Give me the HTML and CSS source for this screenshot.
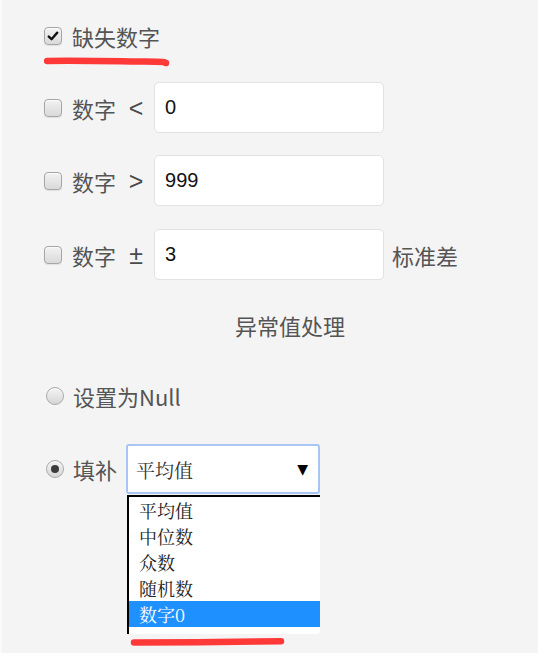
FILE: index.html
```html
<!DOCTYPE html>
<html lang="zh-CN">
<head>
<meta charset="utf-8">
<title>缺失数字</title>
<link rel="stylesheet" href="styles.css">
</head>
<body>
<div class="page">
  <div class="row row-first">
    <span class="cb checked"><svg viewBox="0 0 18 18" width="18" height="18"><path d="M4.2 9.6 L7.4 12.6 L13.8 5.2" fill="none" stroke="#111" stroke-width="2.6" stroke-linecap="round" stroke-linejoin="round"/></svg></span>
    <span class="label">缺失数字</span>
  </div>
  <svg class="mark mark-one" viewBox="0 0 126 12" width="126" height="12"><path d="M3 5 C 30 4.5, 70 5.2, 100 5.6 S 118 6.5, 122 7" fill="none" stroke="#ff3838" stroke-width="6.5" stroke-linecap="round"/></svg>

  <div class="row row-input r2">
    <span class="cb"></span>
    <span class="label">数字</span>
    <span class="op">&lt;</span>
    <div class="field">0</div>
  </div>
  <div class="row row-input r3">
    <span class="cb"></span>
    <span class="label">数字</span>
    <span class="op">&gt;</span>
    <div class="field">999</div>
  </div>
  <div class="row row-input r4">
    <span class="cb"></span>
    <span class="label">数字</span>
    <span class="op">±</span>
    <div class="field">3</div>
    <span class="label after">标准差</span>
  </div>

  <div class="heading">异常值处理</div>

  <div class="row radio-row rr1">
    <span class="radio"></span>
    <span class="label">设置为Null</span>
  </div>

  <div class="row radio-row rr2">
    <span class="radio on"><span class="dot"></span></span>
    <span class="label">填补</span>
    <div class="select-wrap">
      <div class="select">
        <span class="sel-text">平均值</span>
        <span class="arrow">▼</span>
      </div>
      <ul class="options">
        <li>平均值</li>
        <li>中位数</li>
        <li>众数</li>
        <li>随机数</li>
        <li class="active">数字0</li>
      </ul>
      <svg class="mark mark-two" viewBox="0 0 156 12" width="156" height="12"><path d="M4 6.6 C 50 6.4, 110 6, 151 5.2" fill="none" stroke="#ff3838" stroke-width="6.5" stroke-linecap="round"/></svg>
    </div>
  </div>
</div>
</body>
</html>
```

FILE: styles.css
```css
html, body {
  margin: 0;
  padding: 0;
  background: #f4f4f4;
}

.page {
  width: 538px;
  height: 653px;
  box-sizing: border-box;
  border-left: 2px solid #fafafa;
  padding: 18px 2px 0 42px;
  font-family: "Noto Sans CJK SC", "Microsoft YaHei", "Noto Sans", sans-serif;
  color: #555;
  overflow: hidden;
}

.row {
  display: flex;
  align-items: center;
}

.row-first {
  height: 36px;
}

.label {
  font-size: 22px;
  line-height: 30px;
  white-space: nowrap;
}

.cb {
  width: 16px;
  height: 16px;
  flex: 0 0 auto;
  margin-right: 10px;
  border: 1px solid #a6a6a6;
  border-radius: 4px;
  background: linear-gradient(#f2f2f2, #d9d9d9);
  box-shadow: inset 0 1px 1px rgba(255,255,255,0.8), 0 1px 1px rgba(0,0,0,0.08);
  display: flex;
  align-items: center;
  justify-content: center;
  overflow: hidden;
}

.cb svg {
  display: block;
}

.mark {
  display: block;
}

.mark-one {
  margin: 2px 0 0 0;
}

.row-input {
  height: 51px;
}

.r2 { margin-top: 14px; }
.r3 { margin-top: 22px; }
.r4 { margin-top: 23px; }

.op {
  width: 22px;
  margin-left: 9px;
  margin-right: 7px;
  text-align: center;
  font-family: "Liberation Sans", Arial, sans-serif;
  font-size: 25px;
  line-height: 30px;
  color: #4a4a4a;
}

.field {
  width: 228px;
  height: 49px;
  background: #fff;
  border: 1px solid #e2e2e2;
  border-radius: 5px;
  box-sizing: content-box;
  display: flex;
  align-items: center;
  font-family: "Liberation Sans", Arial, sans-serif;
  font-size: 20px;
  color: #111;
  text-indent: 10px;
}

.after {
  margin-left: 8px;
}

.heading {
  margin-top: 31px;
  height: 28px;
  line-height: 28px;
  text-align: center;
  font-size: 22px;
  color: #555;
}

.radio-row .label {
  margin-left: 9px;
}

.rr1 {
  margin-top: 42px;
  height: 30px;
}

.rr2 {
  margin-top: 33px;
  align-items: flex-start;
}

.rr2 .label {
  margin-top: 10px;
}

.radio {
  width: 16px;
  height: 16px;
  margin-left: 2px;
  flex: 0 0 auto;
  border: 1px solid #a9a9a9;
  border-radius: 50%;
  background: linear-gradient(#f4f4f4, #d6d6d6);
  box-shadow: inset 0 1px 1px rgba(255,255,255,0.8);
  display: flex;
  align-items: center;
  justify-content: center;
}

.rr2 .radio {
  margin-top: 16px;
}

.dot {
  width: 8px;
  height: 8px;
  border-radius: 50%;
  background: #3c3c3c;
}

.select-wrap {
  margin-left: 9px;
  width: 194px;
  display: flex;
  flex-direction: column;
}

.select {
  height: 46px;
  border: 2px solid #a7c6f5;
  border-radius: 3px;
  background: #fff;
  display: flex;
  align-items: center;
  justify-content: space-between;
  padding: 0 10px 0 8px;
}

.sel-text {
  font-family: "Noto Serif CJK SC", "Noto Sans CJK SC", serif;
  font-size: 19px;
  color: #333;
}

.arrow {
  font-family: "DejaVu Sans", sans-serif;
  font-size: 14px;
  color: #000;
}

.options {
  list-style: none;
  margin: 1px 0 0 1px;
  padding: 0 0 7px 0;
  background: #fff;
  border-left: 2px solid #000;
  border-top: 2px solid #000;
  border-radius: 0 0 3px 0;
  font-family: "Noto Serif CJK SC", "Noto Sans CJK SC", serif;
  font-size: 18px;
  color: #222;
}

.options li {
  height: 26px;
  line-height: 26px;
  padding-left: 10px;
}

.options li.active {
  background: #1e90ff;
  color: #fff;
}

.mark-two {
  margin: 2px 0 0 4px;
}
```
